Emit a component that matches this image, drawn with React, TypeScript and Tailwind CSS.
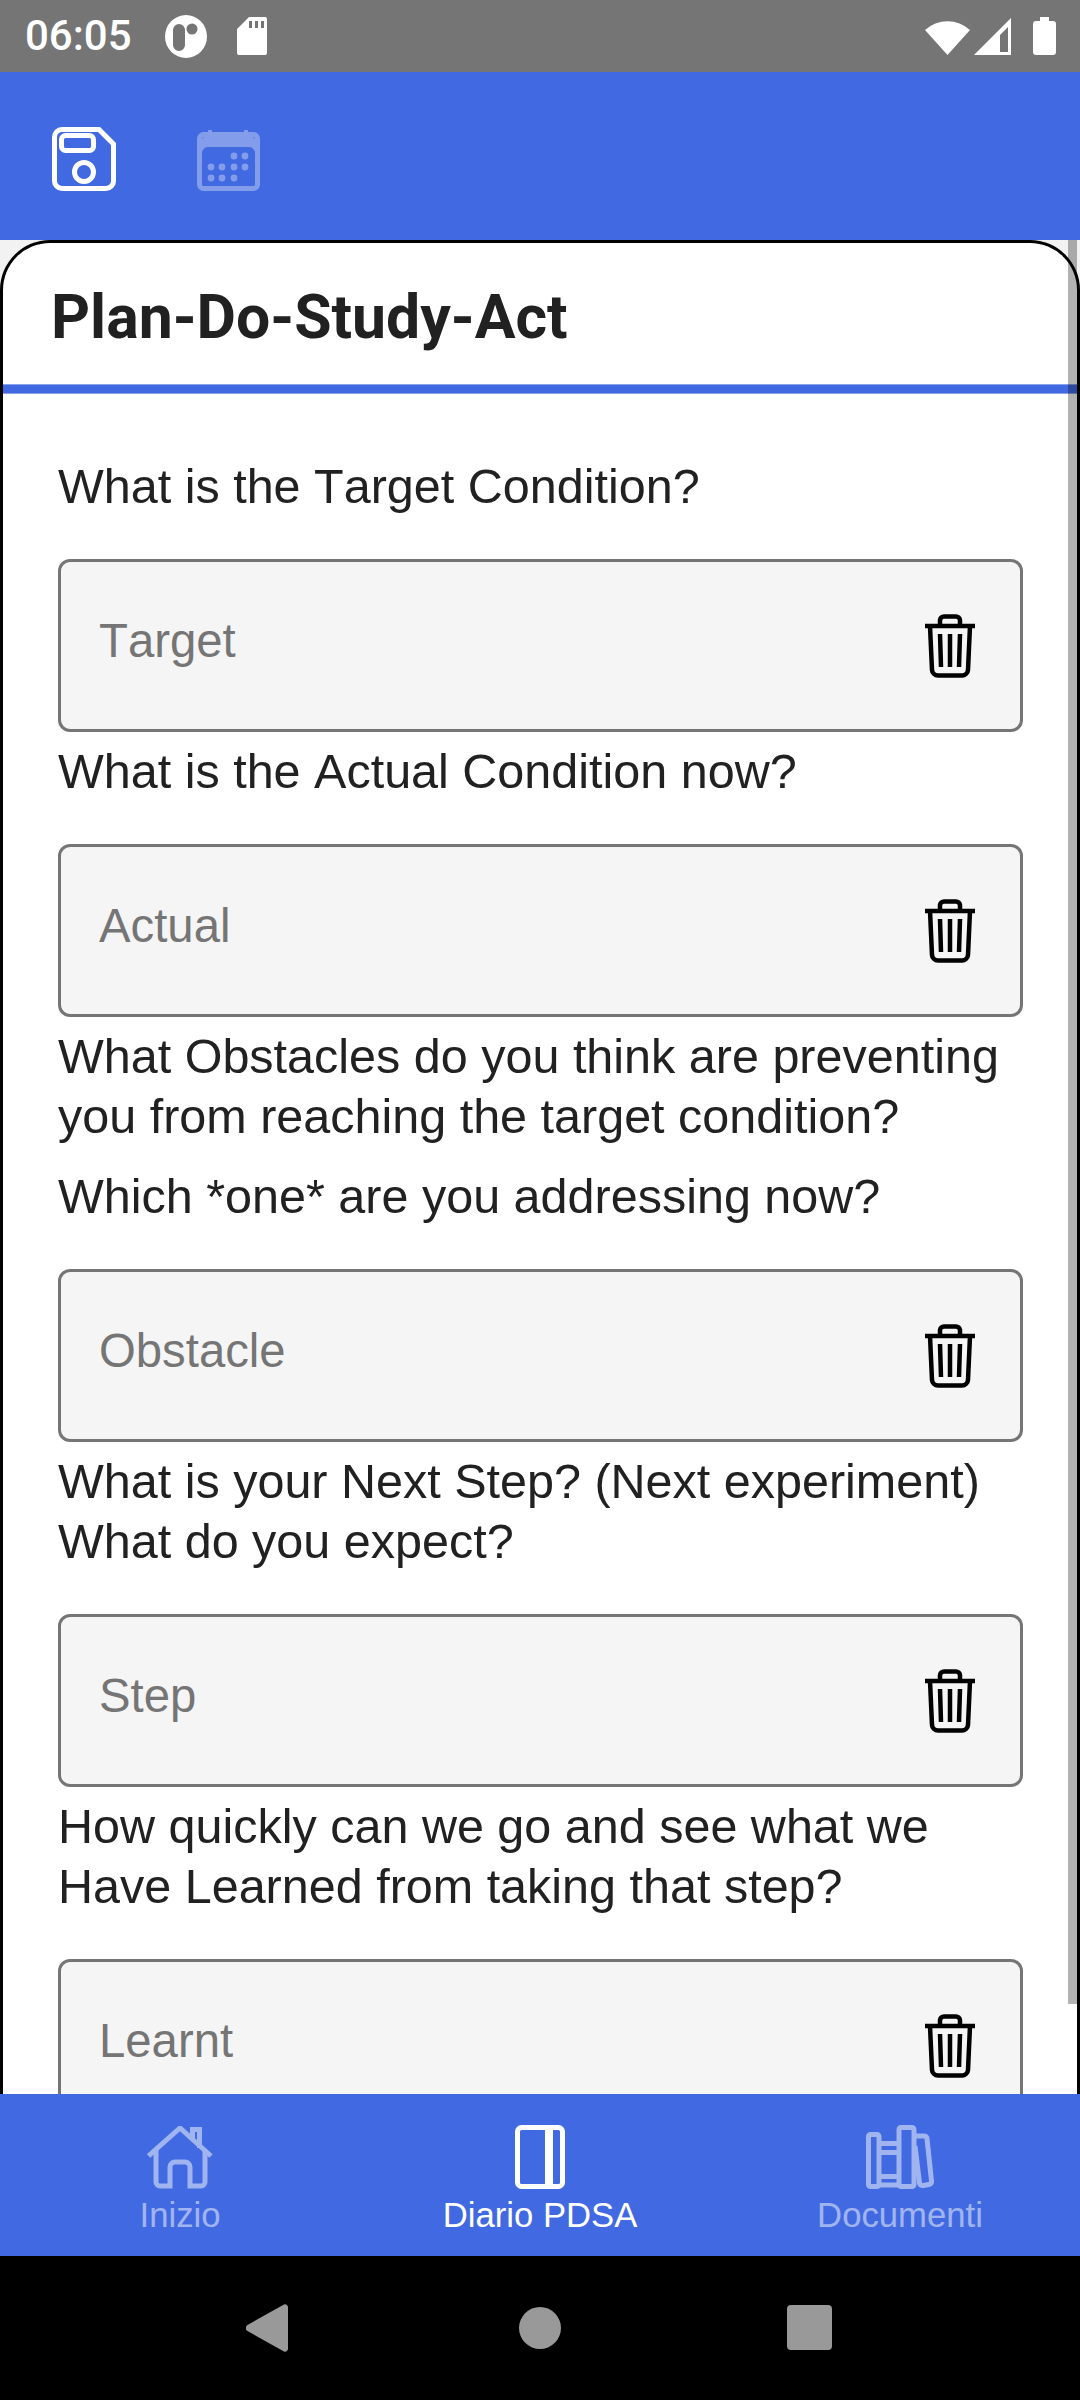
import React from 'react';

const SaveIcon = () => (
  <svg width="64" height="64" viewBox="0 0 64 64" fill="none" stroke="white" strokeWidth="5">
    <path d="M10 2.5H47L61.5 17V54A7.5 7.5 0 0 1 54 61.5H10A7.5 7.5 0 0 1 2.5 54V10A7.5 7.5 0 0 1 10 2.5Z" />
    <rect x="9.5" y="8.5" width="32" height="15" rx="4" />
    <circle cx="32" cy="45" r="9.5" />
  </svg>
);

const CalendarIcon = () => (
  <svg width="63" height="61" viewBox="0 0 63 61" className="opacity-35 mt-[3px]" fill="white">
    <rect x="11" y="0" width="4" height="4" />
    <rect x="47" y="0" width="4" height="4" />
    <rect x="2.5" y="4.5" width="58" height="54" rx="4" fill="none" stroke="white" strokeWidth="5" />
    <path d="M5 10A3 3 0 0 1 8 7H55A3 3 0 0 1 58 10V22C57 19 55 17 52 17H11C8 17 6 19 5 22Z" />
    {[[37, 26], [48, 26], [14, 37], [25, 37], [37, 37], [48, 37], [14, 48], [25, 48], [37, 48]].map(([cx, cy]) => (
      <circle key={`${cx}-${cy}`} cx={cx} cy={cy} r="3.4" />
    ))}
  </svg>
);

const TrashIcon = () => (
  <svg width="50" height="64" viewBox="0 0 50 64" fill="none" stroke="black" strokeWidth="4.5">
    <path d="M0 12H50" />
    <path d="M15 11V6A4 4 0 0 1 19 2.5H31A4 4 0 0 1 35 6V11" />
    <path d="M5 12L7 56A6 6 0 0 0 13 61.5H37A6 6 0 0 0 43 56L45 12" />
    <path d="M15 20L16 53M25 20V53M35 20L34 53" />
  </svg>
);

const HomeIcon = () => (
  <svg width="66" height="63" viewBox="0 0 66 63" fill="none" stroke="white" strokeWidth="5">
    <path d="M1.5 30L33 2L64 30" />
    <path d="M9 24V56A4 4 0 0 0 13 60H23V41A5 5 0 0 1 28 36H38A5 5 0 0 1 43 41V60H54A4 4 0 0 0 58 56V24" />
    <path d="M45.5 12V3.5H52.5V22" />
  </svg>
);

const PanelIcon = () => (
  <svg width="50" height="64" viewBox="0 0 50 64" fill="white">
    <rect x="2.5" y="2.5" width="45" height="59" rx="4" fill="none" stroke="white" strokeWidth="5" />
    <rect x="30" y="3" width="8" height="58" />
  </svg>
);

const BooksIcon = () => (
  <svg width="68" height="64" viewBox="0 0 68 64" fill="none" stroke="white" strokeWidth="5">
    <rect x="2.5" y="9.5" width="10.5" height="52" rx="2" />
    <path d="M13 18.5H33M13 27.5H33M13 51.5H33M13 60H33" />
    <rect x="33" y="2.5" width="15" height="59" rx="2" />
    <path d="M49 11H58A3 3 0 0 1 61 13.5L65.5 56A3 3 0 0 1 63 59.5L57 60.5A3 3 0 0 1 53.5 58L49 21" />
  </svg>
);

const fields = [
  { lines: ['What is the Target Condition?'], placeholder: 'Target' },
  { lines: ['What is the Actual Condition now?'], placeholder: 'Actual' },
  {
    lines: ['What Obstacles do you think are preventing you from reaching the target condition?', 'Which *one* are you addressing now?'],
    placeholder: 'Obstacle',
  },
  { lines: ['What is your Next Step? (Next experiment) What do you expect?'], placeholder: 'Step' },
  { lines: ['How quickly can we go and see what we Have Learned from taking that step?'], placeholder: 'Learnt' },
];

const navItems = [
  { label: 'Inizio', icon: <HomeIcon />, active: false },
  { label: 'Diario PDSA', icon: <PanelIcon />, active: true },
  { label: 'Documenti', icon: <BooksIcon />, active: false },
];

const App = () => {
  return (
    <div className="w-[1080px] h-[2400px] flex flex-col overflow-hidden bg-black font-['Liberation_Sans',sans-serif] [font-kerning:none]">
      {/* status bar */}
      <div className="h-[72px] shrink-0 bg-[#757575] flex items-center pl-[25px] pr-[24px] text-white">
        <span className="font-['Roboto',sans-serif] font-medium text-[42px] leading-none">06:05</span>
        <svg width="42" height="43" viewBox="0 0 42 43" className="ml-[33px]">
          <path fillRule="evenodd" fill="white" d="M21 0A21 21.5 0 1 1 21 43A21 21.5 0 1 1 21 0ZM14 9A6 6 0 0 0 8 15V30A6 6 0 0 0 20 30V15A6 6 0 0 0 14 9ZM27 8.5A5.5 5.5 0 1 0 27 19.5A5.5 5.5 0 1 0 27 8.5Z" />
        </svg>
        <svg width="30" height="38" viewBox="0 0 30 38" className="ml-[30px]">
          <path fillRule="evenodd" fill="white" d="M12 0H28A2 2 0 0 1 30 2V36A2 2 0 0 1 28 38H2A2 2 0 0 1 0 36V12ZM12 4V11H15V4ZM18 4V11H21V4ZM24 4V11H27V4Z" />
        </svg>
        <svg width="45" height="37" viewBox="0 0 45 37" className="ml-auto">
          <path fill="white" d="M0 12A33 33 0 0 1 45 12L22.5 37Z" />
        </svg>
        <svg width="37" height="37" viewBox="0 0 37 37" className="ml-[4px]">
          <path fillRule="evenodd" fill="white" d="M37 0V37H0ZM34 9L26 17V34H34Z" />
        </svg>
        <svg width="23" height="38" viewBox="0 0 23 38" className="ml-[22px]">
          <path fill="white" d="M7 0H16V4H20A3 3 0 0 1 23 7V35A3 3 0 0 1 20 38H3A3 3 0 0 1 0 35V7A3 3 0 0 1 3 4H7Z" />
        </svg>
      </div>

      {/* toolbar */}
      <div className="h-[168px] shrink-0 bg-[#4169e1] flex items-start pt-[55px] pl-[52px] gap-[81px]">
        <SaveIcon />
        <CalendarIcon />
      </div>

      {/* scrolling card */}
      <div className="relative flex-1 min-h-0 bg-[#f2f2f2]">
        <div className="h-full bg-white border-[3px] border-b-0 border-black rounded-t-[50px] overflow-hidden">
          <h1 className="h-[141px] pl-[48px] pt-[8px] flex items-center font-['Roboto',sans-serif] font-bold text-[60.7px] text-[#212121]">
            Plan-Do-Study-Act
          </h1>
          <div className="h-[10px] bg-[#4169e1] border-y border-[#8aa2ec]"></div>
          <div className="pt-[53px] pl-[55px] pr-[54px]">
            {fields.map((field) => (
              <div key={field.placeholder} className="pt-[9px]">
                {field.lines.map((line, i) => (
                  <p key={i} className={`text-[48.5px] leading-[60px] text-[#212121] ${i > 0 ? 'mt-[20px]' : ''}`}>
                    {line}
                  </p>
                ))}
                <div className="mt-[43px] h-[173px] bg-[#f5f5f5] border-[3px] border-[#757575] rounded-[12px] flex items-center pl-[38px] pr-[45px]">
                  <span className="flex-1 text-[47.3px] text-[#757575] -mt-[8px]">{field.placeholder}</span>
                  <TrashIcon />
                </div>
              </div>
            ))}
          </div>
        </div>
        <div className="absolute top-0 right-[3px] w-[9px] h-[1764px] bg-black/30"></div>
      </div>

      {/* bottom nav */}
      <div className="h-[162px] shrink-0 bg-[#4169e1] grid grid-cols-3 pt-[31px]">
        {navItems.map((item) => (
          <div key={item.label} className={`flex flex-col items-center ${item.active ? 'text-white' : 'text-white opacity-50'}`}>
            <div className="h-[64px] flex items-center">{item.icon}</div>
            <span className="text-[34.7px] leading-[40px] mt-[6px]">{item.label}</span>
          </div>
        ))}
      </div>

      {/* android nav */}
      <div className="h-[144px] shrink-0 bg-black relative">
        <svg width="42" height="48" viewBox="0 0 42 48" className="absolute left-[246px] top-[48px]">
          <path fill="#999999" d="M38 0.5A3 3 0 0 1 42 3V45A3 3 0 0 1 38 47.5L1.5 27A3.5 3.5 0 0 1 1.5 21Z" />
        </svg>
        <div className="absolute left-[519px] top-[51px] w-[42px] h-[42px] rounded-full bg-[#999999]"></div>
        <div className="absolute left-[787px] top-[49px] w-[45px] h-[45px] rounded-[4px] bg-[#999999]"></div>
      </div>
    </div>
  );
};

export default App;
